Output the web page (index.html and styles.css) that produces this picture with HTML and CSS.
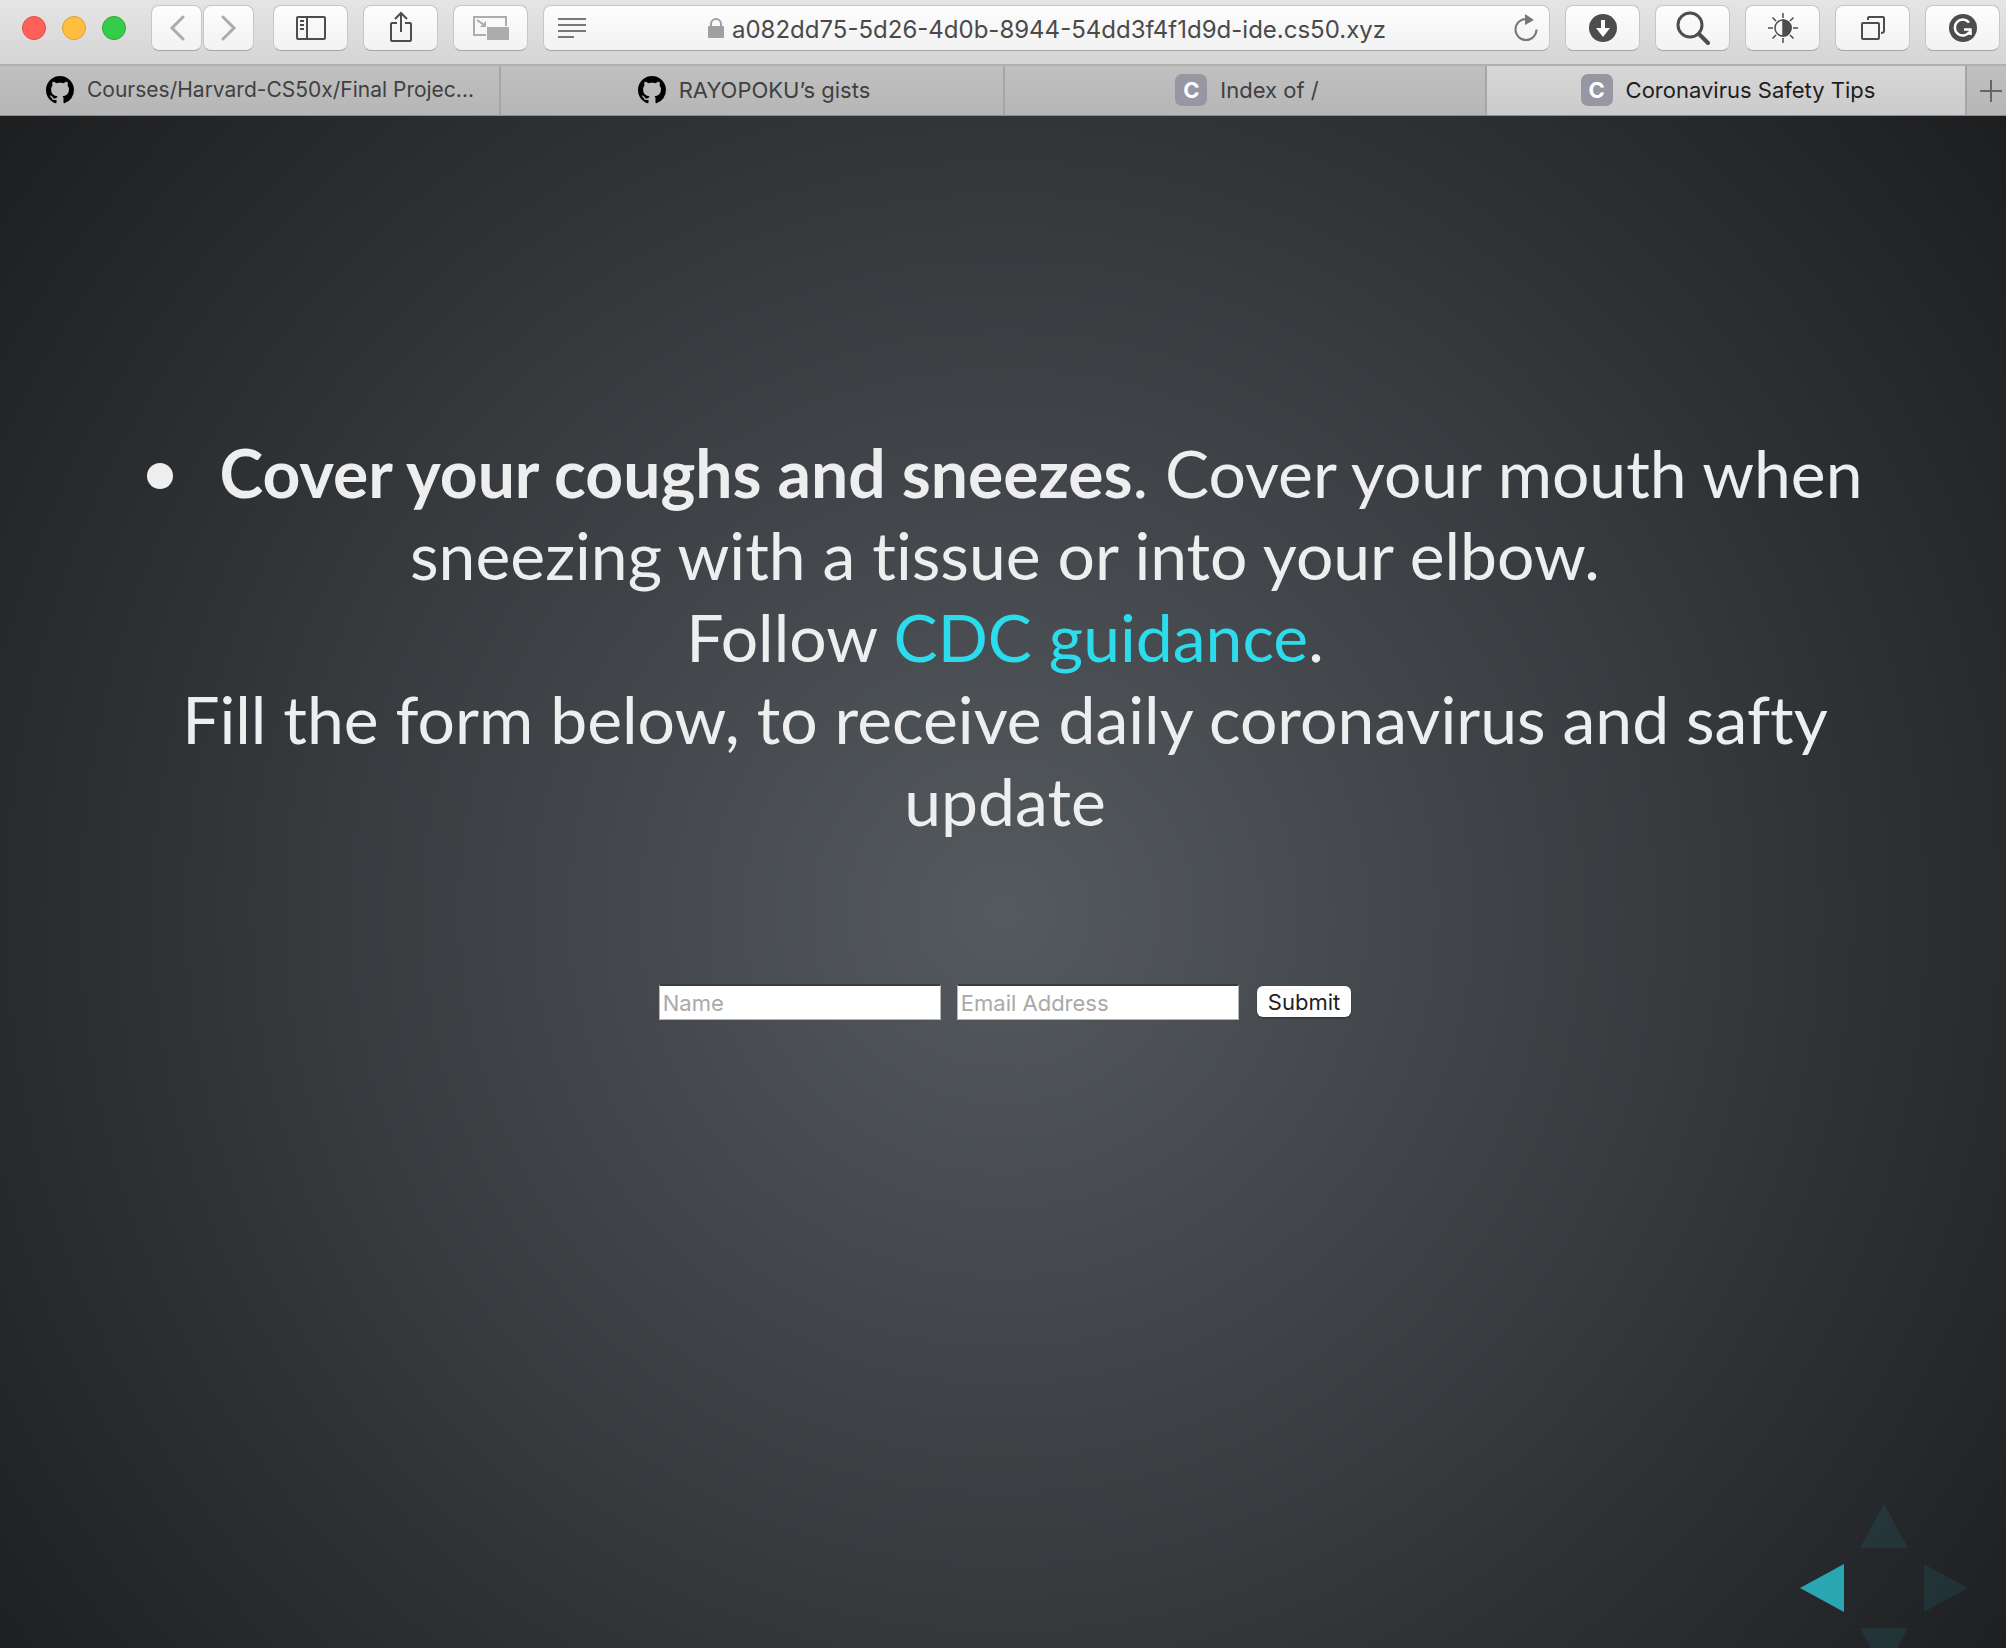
FILE: index.html
```html
<!DOCTYPE html>
<html lang="en">
<head>
<meta charset="utf-8">
<title>Coronavirus Safety Tips</title>
<link rel="stylesheet" href="styles.css">
</head>
<body>
<header class="toolbar">
  <div class="lights">
    <span class="light light-close"></span>
    <span class="light light-minimize"></span>
    <span class="light light-zoom"></span>
  </div>
  <div class="history">
    <button class="tool tool-small" type="button" aria-label="Back"><svg width="16" height="26" viewBox="0 0 16 26" fill="none" stroke="#acacac" stroke-width="3"><path d="M14 2 3 13l11 11" stroke-linecap="round"/></svg></button>
    <button class="tool tool-small" type="button" aria-label="Forward"><svg width="16" height="26" viewBox="0 0 16 26" fill="none" stroke="#acacac" stroke-width="3"><path d="m2 2 11 11L2 24" stroke-linecap="round"/></svg></button>
  </div>
  <div class="tools">
    <button class="tool" type="button" aria-label="Sidebar"><svg width="30" height="24" viewBox="0 0 30 24" fill="none" stroke="#4d4d4d" stroke-width="2"><rect x="1" y="1" width="28" height="22" rx="1"/><path d="M11 1v22M4 5h4M4 9h4M4 13h4"/></svg></button>
    <button class="tool" type="button" aria-label="Share"><svg class="raised" width="24" height="32" viewBox="0 0 24 32" fill="none" stroke="#4d4d4d" stroke-width="2"><path d="M8 12H3q-1 0-1 1v16q0 1 1 1h18q1 0 1-1V13q0-1-1-1h-5M12 21V2M6 8l6-6 6 6"/></svg></button>
    <button class="tool" type="button" aria-label="Picture in picture"><svg width="38" height="26" viewBox="0 0 38 26" fill="none" stroke="#acacac" stroke-width="2"><path d="M14 20H2V2h32v9M5 5l7 5"/><path d="m14 6 0 6H8z" fill="#acacac" stroke="none"/><path d="M15 12h22v13H15z" fill="#acacac" stroke="none"/></svg></button>
  </div>
  <div class="address">
    <svg width="28" height="20" viewBox="0 0 28 20" stroke="#777" stroke-width="2"><path d="M0 1h28M0 7h28M0 13h28M0 19h16"/></svg>
    <div class="location">
      <svg width="16" height="20" viewBox="0 0 16 20"><path d="M3 9V6a5 5 0 0 1 10 0v3" fill="none" stroke="#a0a0a0" stroke-width="2"/><rect y="8" width="16" height="12" rx="1" fill="#a0a0a0"/></svg>
      <span class="url">a082dd75-5d26-4d0b-8944-54dd3f4f1d9d-ide.cs50.xyz</span>
    </div>
    <svg width="24" height="28" viewBox="0 0 24 28"><path d="M12 5a10.500 10.500 0 1 0 10.500 10.500" fill="none" stroke="#777" stroke-width="2"/><path d="m11 0 9 6-9 5z" fill="#777"/></svg>
  </div>
  <div class="tools">
    <button class="tool" type="button" aria-label="Downloads"><svg width="28" height="28" viewBox="0 0 28 28"><circle cx="14" cy="14" r="14" fill="#4d4d4d"/><path d="M12 6h4v8h5l-7 9-7-9h5z" fill="#fff"/></svg></button>
    <button class="tool" type="button" aria-label="Search"><svg width="34" height="34" viewBox="0 0 34 34" fill="none" stroke="#4d4d4d"><circle cx="14" cy="14" r="12" stroke-width="3"/><path d="m23 23 9 9" stroke-width="4" stroke-linecap="round"/></svg></button>
    <button class="tool" type="button" aria-label="Brightness"><svg width="30" height="30" viewBox="0 0 30 30" fill="none" stroke="#4d4d4d" stroke-width="1.500"><circle cx="15" cy="15" r="8"/><path d="M15 7a8 8 0 0 1 0 16z" fill="#4d4d4d"/><path d="M15 0v5M15 25v5M0 15h5M25 15h5M4.500 4.500 8 8M22 22l3.500 3.500M4.500 25.500 8 22M22 8l3.500-3.500"/></svg></button>
    <button class="tool" type="button" aria-label="Tab overview"><svg width="24" height="24" viewBox="0 0 24 24" fill="none" stroke="#4d4d4d" stroke-width="2"><rect x="1" y="7" width="17" height="16" rx="1"/><path d="M7 4V2q0-1 1-1h14q1 0 1 1v13q0 2-3 2"/></svg></button>
    <button class="tool" type="button" aria-label="Grammarly"><svg width="28" height="28" viewBox="0 0 28 28" fill="none"><circle cx="14" cy="14" r="14" fill="#4d4d4d"/><path d="M20 8.500A8 8 0 1 0 20.500 18M15 15.500h6.500v5.500" stroke="#fff" stroke-width="2.500"/></svg></button>
  </div>
</header>
<nav class="tabs" aria-label="Tabs">
  <a class="tab tab-long" href="#courses"><svg width="28" height="28" viewBox="0 0 16 16"><path d="M8 0C3.580 0 0 3.580 0 8c0 3.540 2.290 6.530 5.470 7.590.4.070.55-.17.55-.38 0-.19-.01-.82-.01-1.490-2.010.37-2.530-.49-2.690-.94-.09-.23-.48-.94-.82-1.130-.28-.15-.68-.52-.01-.53.63-.01 1.080.58 1.230.82.72 1.210 1.870.87 2.330.66.07-.52.28-.87.51-1.070-1.780-.2-3.640-.89-3.640-3.950 0-.87.31-1.590.82-2.150-.08-.2-.36-1.020.08-2.120 0 0 .67-.21 2.200.82.64-.18 1.320-.27 2-.27s1.360.09 2 .27c1.530-1.040 2.200-.82 2.200-.82.44 1.100.16 1.920.08 2.120.51.56.82 1.270.82 2.150 0 3.070-1.870 3.750-3.650 3.950.29.25.54.73.54 1.480 0 1.070-.01 1.930-.01 2.200 0 .21.15.46.55.38A8.010 8.010 0 0 0 16 8c0-4.420-3.580-8-8-8z"/></svg>Courses/Harvard-CS50x/Final Projec...</a>
  <a class="tab" href="#gists"><svg width="28" height="28" viewBox="0 0 16 16"><path d="M8 0C3.580 0 0 3.580 0 8c0 3.540 2.290 6.530 5.470 7.590.4.070.55-.17.55-.38 0-.19-.01-.82-.01-1.490-2.010.37-2.530-.49-2.690-.94-.09-.23-.48-.94-.82-1.130-.28-.15-.68-.52-.01-.53.63-.01 1.080.58 1.230.82.72 1.210 1.870.87 2.330.66.07-.52.28-.87.51-1.070-1.780-.2-3.640-.89-3.640-3.950 0-.87.31-1.590.82-2.150-.08-.2-.36-1.020.08-2.120 0 0 .67-.21 2.200.82.64-.18 1.320-.27 2-.27s1.360.09 2 .27c1.530-1.040 2.200-.82 2.200-.82.44 1.100.16 1.920.08 2.120.51.56.82 1.270.82 2.150 0 3.070-1.870 3.750-3.650 3.950.29.25.54.73.54 1.480 0 1.070-.01 1.930-.01 2.200 0 .21.15.46.55.38A8.010 8.010 0 0 0 16 8c0-4.420-3.580-8-8-8z"/></svg>RAYOPOKU’s gists</a>
  <a class="tab" href="#index"><span class="favicon">C</span>Index of /</a>
  <a class="tab tab-active" href="#tips"><span class="favicon">C</span>Coronavirus Safety Tips</a>
  <button class="new-tab" type="button" aria-label="New tab"><svg width="24" height="24" viewBox="0 0 24 24" stroke="#666" stroke-width="2"><path d="M12 1v22M1 12h22"/></svg></button>
</nav>
<main class="stage">
  <ul class="tips">
    <li class="tip"><strong>Cover your coughs and sneezes</strong>. Cover your mouth when sneezing with a tissue or into your elbow.</li>
  </ul>
  <p class="line">Follow <a class="link" href="#cdc">CDC guidance</a>.</p>
  <p class="line">Fill the form below, to receive daily coronavirus and safty update</p>
  <form class="signup">
    <input class="field" type="text" placeholder="Name" aria-label="Name">
    <input class="field" type="email" placeholder="Email Address" aria-label="Email Address">
    <button class="submit" type="submit">Submit</button>
  </form>
  <div class="controls">
    <button class="arrow arrow-up" type="button" aria-label="Up"><svg width="48" height="44" viewBox="0 0 48 44"><path d="M0 44 24 0l24 44z"/></svg></button>
    <button class="arrow arrow-left" type="button" aria-label="Previous"><svg width="44" height="48" viewBox="0 0 44 48"><path d="M44 0v48L0 24z"/></svg></button>
    <button class="arrow arrow-right" type="button" aria-label="Next"><svg width="44" height="48" viewBox="0 0 44 48"><path d="M0 0v48l44-24z"/></svg></button>
    <button class="arrow arrow-down" type="button" aria-label="Down"><svg width="48" height="44" viewBox="0 0 48 44"><path d="M0 0h48L24 44z"/></svg></button>
  </div>
</main>
</body>
</html>
```

FILE: styles.css
```css
* { box-sizing: border-box; }
body {
  margin: 0;
  min-height: 100vh;
  display: flex;
  flex-direction: column;
  font-family: Inter, "Liberation Sans", sans-serif;
}
svg { display: block; flex: none; }
button { font: inherit; cursor: pointer; }

/* Browser toolbar */
.toolbar {
  display: flex;
  align-items: flex-start;
  height: 66px;
  padding: 5px 6px 0 22px;
  background: linear-gradient(#e5e5e5, #d5d5d5);
  border-bottom: 2px solid #b0b0b0;
}
.lights { display: flex; gap: 16px; margin: 11px 25px 0 0; }
.light { width: 24px; height: 24px; border-radius: 50%; border: 1px solid; }
.light-close { background: #ff5f59; border-color: #e24b44; }
.light-minimize { background: #ffbe3f; border-color: #dfa032; }
.light-zoom { background: #35cc4b; border-color: #27aa35; }
.history { display: flex; gap: 1px; margin-right: 19px; }
.tools { display: flex; gap: 15px; }
.tool {
  display: flex;
  align-items: center;
  justify-content: center;
  width: 75px;
  height: 46px;
  padding: 0;
  border: 1px solid #c6c6c6;
  border-bottom-color: #a6a6a6;
  border-radius: 8px;
  background: linear-gradient(#fdfdfd, #f2f2f2);
}
.tool-small { width: 51px; }
.raised { margin-bottom: 2px; }
.address {
  flex: 1;
  display: flex;
  align-items: center;
  justify-content: space-between;
  height: 46px;
  margin: 0 15px;
  padding: 0 11px 0 14px;
  border: 1px solid #c6c6c6;
  border-bottom-color: #a6a6a6;
  border-radius: 8px;
  background: linear-gradient(#fdfdfd, #f2f2f2);
}
.location { display: flex; align-items: center; gap: 8px; margin-right: 6px; }
.url { padding-top: 3px; font-size: 24px; line-height: 30px; color: #4a4a4a; }

/* Tabs */
.tabs {
  display: grid;
  grid-template-columns: 501fr 504fr 482fr 480fr 39fr;
  height: 50px;
  background: linear-gradient(#c0c0c0, #b6b6b6);
  border-bottom: 1px solid #8e8e8e;
}
.tab {
  display: flex;
  align-items: center;
  justify-content: center;
  gap: 13px;
  padding: 0 0 2px 4px;
  border-right: 2px solid #a6a6a6;
  font-size: 22px;
  color: #404040;
  text-decoration: none;
  white-space: nowrap;
}
.tab-long { justify-content: flex-start; padding-left: 46px; font-size: 21px; }
.tab-active { background: linear-gradient(#d7d7d7, #cbcbcb); color: #1e1e1e; }
.favicon {
  width: 32px;
  border-radius: 7px;
  background: #9697a3;
  color: #fff;
  font-weight: 700;
  line-height: 32px;
  text-align: center;
}
.new-tab {
  display: flex;
  align-items: center;
  justify-content: flex-end;
  padding: 0 3px 0 0;
  border: 0;
  background: none;
}

/* Slide */
.stage {
  flex: 1;
  position: relative;
  overflow: hidden;
  padding: 316px 118px 0 122px;
  background: radial-gradient(circle farthest-corner at 50% 52%, #555a5f, #1c1e20);
  color: #eee;
  font-family: Lato, "Liberation Sans", sans-serif;
  font-size: 66px;
  font-variant-ligatures: none;
  line-height: 82px;
  text-align: center;
}
.tips { margin: 0; padding: 0; list-style: none; }
.tip::before {
  content: "";
  display: inline-block;
  width: 26px;
  height: 26px;
  margin-right: 46px;
  border-radius: 50%;
  background: #eee;
  vertical-align: 9px;
}
.line { margin: 0; }
.link { color: #2ddcec; text-decoration: none; }

.signup {
  display: flex;
  justify-content: center;
  gap: 16px;
  margin-top: 142px;
  font-family: Inter, "Liberation Sans", sans-serif;
  font-size: 22px;
  line-height: 30px;
}
.field {
  width: 282px;
  height: 36px;
  padding: 0 3px;
  border: 1px solid #b5b5b5;
  border-top: 2px solid #3a3c3e;
  border-radius: 0;
  background: #fff;
  font: inherit;
}
.field::placeholder { color: #a9a9a9; opacity: 1; }
.submit {
  height: 31px;
  margin: 2px 0 0 2px;
  padding: 0 11px;
  border: 0;
  border-radius: 6px;
  background: #fff;
  color: #222;
  box-shadow: 0 1px 2px #0006;
}

/* Slide navigation, laid over the lower right corner */
.controls {
  position: absolute;
  right: 38px;
  bottom: -24px;
  display: grid;
  grid-template: 44px 80px 44px / 60px 48px 60px;
  align-items: center;
  justify-items: center;
}
.arrow { padding: 0; border: 0; background: none; fill: #2ddcec; opacity: 0.08; }
.arrow-up { grid-area: 1 / 2; }
.arrow-left { grid-area: 2 / 1; justify-self: start; opacity: 0.7; }
.arrow-right { grid-area: 2 / 3; justify-self: end; }
.arrow-down { grid-area: 3 / 2; }
```
